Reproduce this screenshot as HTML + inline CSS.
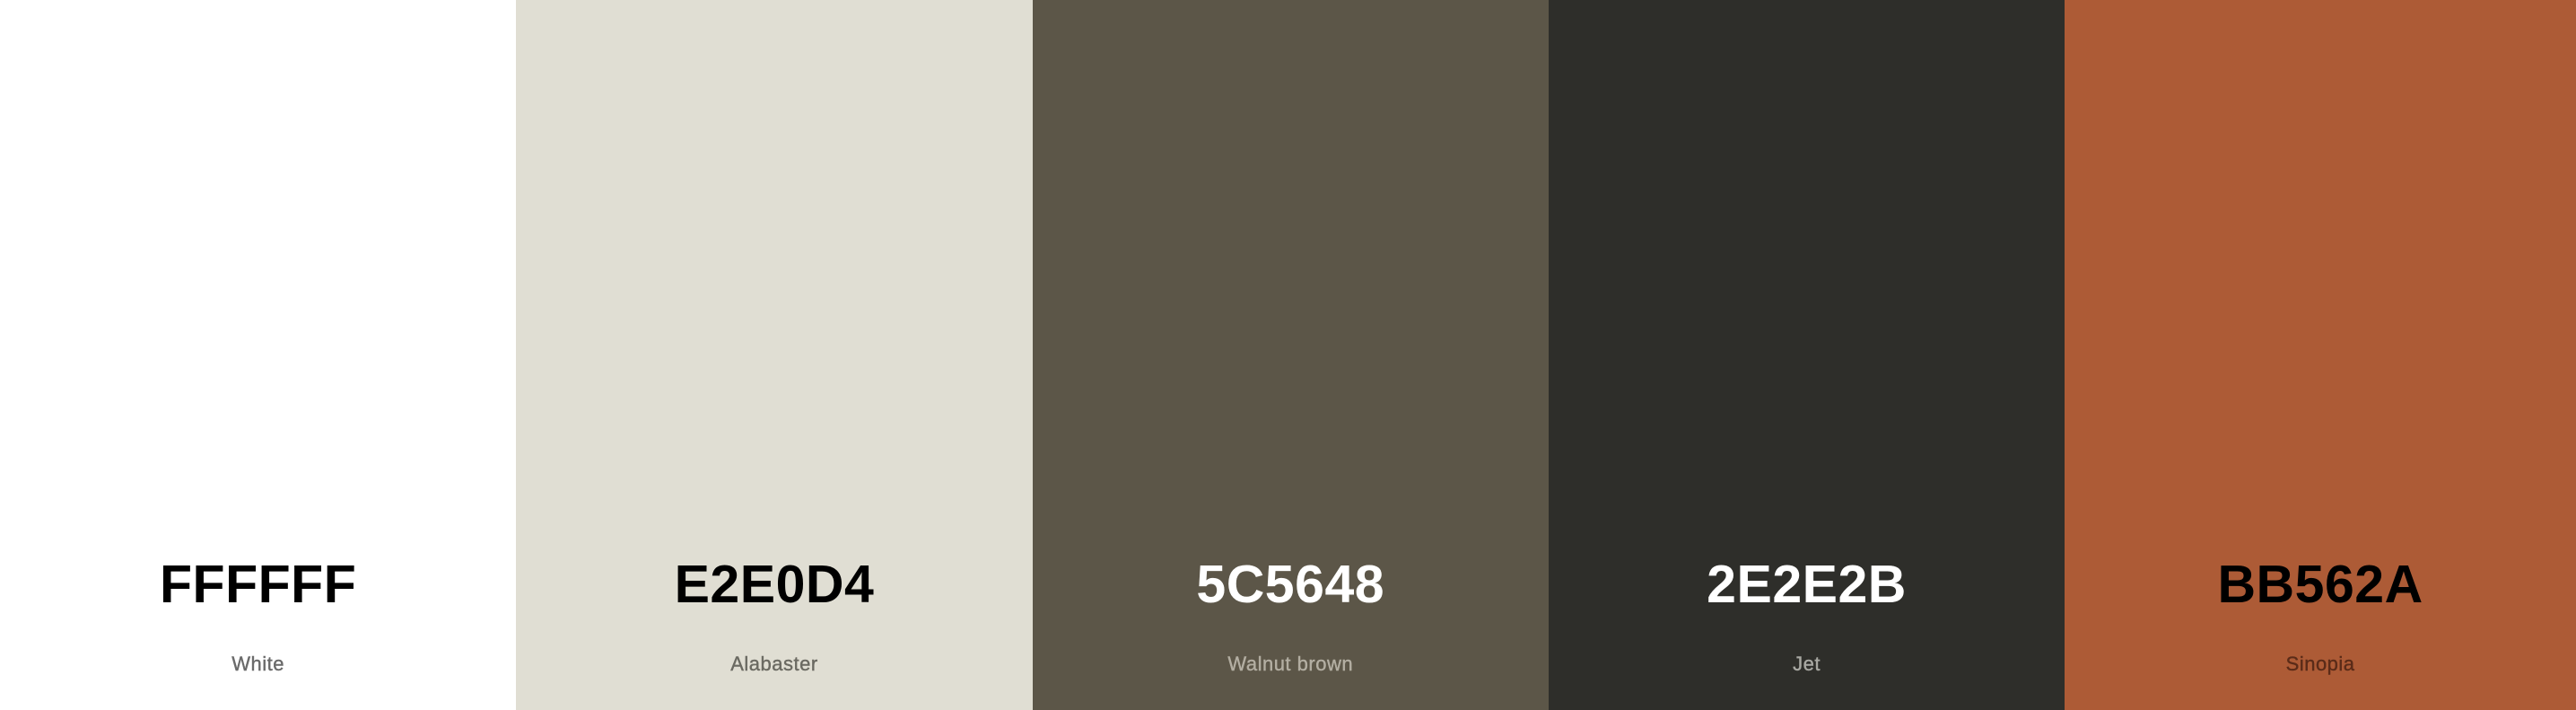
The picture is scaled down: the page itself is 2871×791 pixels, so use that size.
<!DOCTYPE html>
<html><head><style>
html,body{margin:0;padding:0;width:2871px;height:791px;overflow:hidden;font-family:"Liberation Sans",sans-serif}
.row{display:flex;width:2871px;height:791px}
.c{width:575.3px;flex:none;position:relative}
.c:last-child{flex:1}
.h{position:absolute;left:0;right:0;top:619px;text-align:center;font-size:59px;font-weight:bold;letter-spacing:0.5px;line-height:64px}
.n{position:absolute;left:0;right:0;top:727px;text-align:center;font-size:22px;line-height:26px;letter-spacing:0.5px;-webkit-text-stroke:0.4px currentColor}
</style></head><body><div class="row">
<div class="c" style="background:#fff"><div class="h" style="color:#000">FFFFFF</div><div class="n" style="color:#6a6a6a">White</div></div>
<div class="c" style="background:#E0DED3"><div class="h" style="color:#000">E2E0D4</div><div class="n" style="color:#6b6a62">Alabaster</div></div>
<div class="c" style="background:#5C5648"><div class="h" style="color:#fff">5C5648</div><div class="n" style="color:#b3aea2">Walnut brown</div></div>
<div class="c" style="background:#2E2E2A"><div class="h" style="color:#fff">2E2E2B</div><div class="n" style="color:#a8a8a2">Jet</div></div>
<div class="c" style="background:#AD5B36"><div class="h" style="color:#000">BB562A</div><div class="n" style="color:#5a2b18">Sinopia</div></div>
</div></body></html>
